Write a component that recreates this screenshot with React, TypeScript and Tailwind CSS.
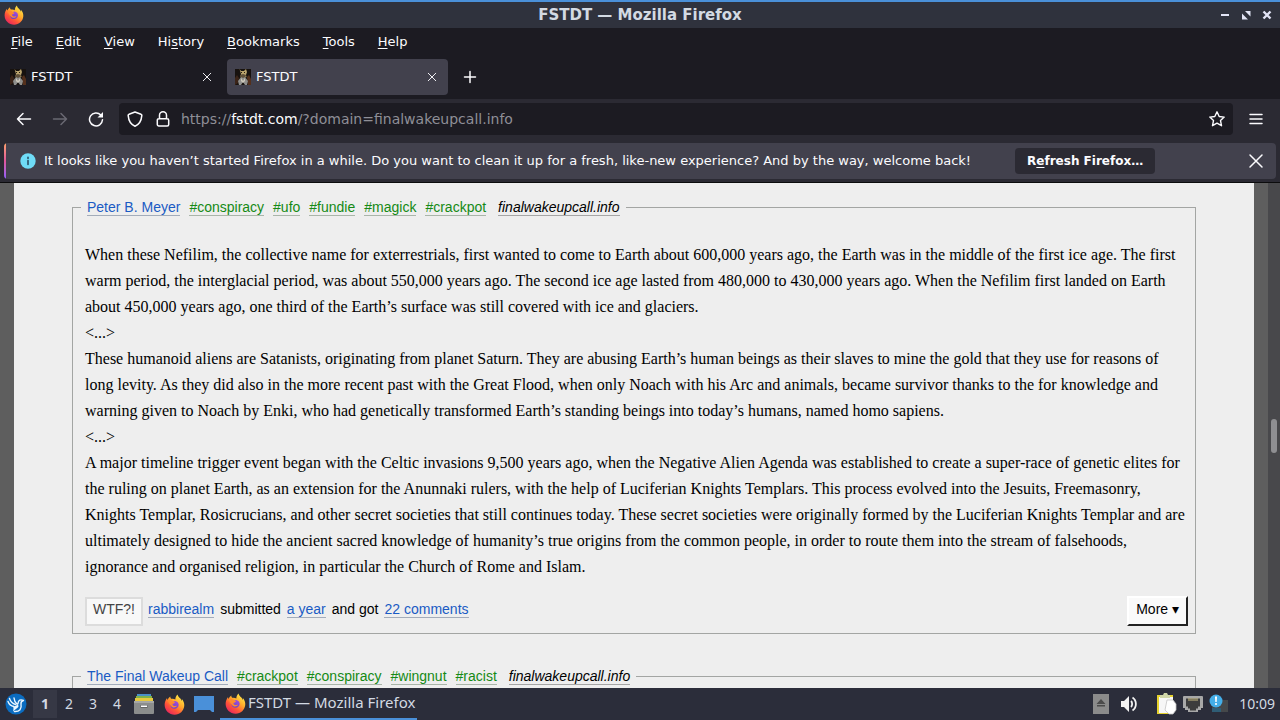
import React from 'react';

const tagLink = 'border-b border-[#a9b5a9] leading-4 text-[#158a15]';
const blueLink = 'border-b border-[#a3acba] leading-4 text-[#1a5bc4]';

function FirefoxLogo({ className }: { className?: string }) {
  return (
    <svg viewBox="0 0 20 20" className={className} aria-hidden="true">
      <defs>
        <linearGradient id="ffBody" x1="0.85" y1="0.05" x2="0.2" y2="0.95">
          <stop offset="0" stopColor="#fff04a" />
          <stop offset="0.4" stopColor="#ffa92b" />
          <stop offset="0.7" stopColor="#ff5438" />
          <stop offset="1" stopColor="#e8265f" />
        </linearGradient>
        <linearGradient id="ffGlobe" x1="0.7" y1="0" x2="0.3" y2="1">
          <stop offset="0" stopColor="#a04be0" />
          <stop offset="1" stopColor="#6b45c4" />
        </linearGradient>
      </defs>
      <path
        fill="url(#ffBody)"
        d="M12.9.4c.3 1.900 1.500 2.700 2.700 4 .7.700 1.100 1.500 1.400 2.300.2-.7.200-1.300 0-2 1.600 1.800 2.500 4 2.300 6.500-.4 4.900-4.300 8.500-9.200 8.500-5.200 0-9.400-4-9.500-9.200 0-2.700.9-4.900 2.300-6.700 0 .8.100 1.300.4 1.800C4 4.400 4.800 3 6 2.300c-.1.900.2 1.700.8 2.300 1.500-.4 2.900-.1 4 .6 0-1.900.8-3.700 2.100-4.800z"
      />
      <path
        fill="url(#ffGlobe)"
        d="M10.500 6.600c2.100.2 3.500 1.700 3.500 3.700 0 2.100-1.700 3.800-3.900 3.800-2.300 0-4-1.600-4-3.700 0-.5.1-.9.200-1.300.800-.4 1.600-.4 2.300 0 .8-.1 1.300-.4 1.800-.9-.8-.1-1.400-.4-1.600-.8.400-.4 1-.7 1.700-.8z"
      />
      <path
        fill="#ff8a2e"
        d="M3.300 6.500c1.400-1 3-1.100 4.500-.2.3.7 1 1.200 2.600 1.300-.2 1-1.500 1.500-2.200 1.800-.3 1.100.4 2 1.600 2 1 0 1.700-.5 2.600-.1-1 1.700-3.100 2-4.700 1-1.700-1-2.500-3.300-4.400-5.800z"
      />
    </svg>
  );
}

function Favicon() {
  return (
    <svg viewBox="0 0 16 16" className="size-4 shrink-0" aria-hidden="true">
      <rect width="16" height="16" fill="#17120f" />
      <path d="M0 9l2-3 2 3-1 5-3 2z" fill="#3b2418" />
      <path d="M12 8l2-2 2 4v6h-3z" fill="#54301c" />
      <path d="M4.500 0l1.500 2h3l2-2 1 3-1 3 .5 2-3 1-3-1 .5-3z" fill="#b9a36c" />
      <path d="M5 6l3-1 3 1-1 3H6z" fill="#5e4f39" />
      <path d="M3 12l3-4 2 1 2-1 3 4-1 4h-2l-2-3-2 3H4z" fill="#8f8f8c" />
      <path d="M6 9l2 3 2-3v3l-2 2-2-2z" fill="#cfcabc" />
      <path d="M6 3h1v1H6zM9 3h1v1H9z" fill="#2c2014" />
    </svg>
  );
}

function Cross({ className }: { className?: string }) {
  return (
    <svg viewBox="0 0 16 16" className={className} aria-hidden="true">
      <path d="M2 2l12 12M14 2L2 14" stroke="currentColor" fill="none" strokeWidth="1.500" strokeLinecap="round" />
    </svg>
  );
}

function Tab({ active }: { active?: boolean }) {
  return (
    <div
      className={
        active
          ? 'flex w-[221px] items-center rounded bg-[#42414d] px-2'
          : 'flex w-[221px] items-center rounded px-2'
      }
    >
      <Favicon />
      <button className="ml-[5px] flex-1 text-left">FSTDT</button>
      <button aria-label="Close tab" className="mr-[3px]">
        <Cross className="size-[10px]" />
      </button>
    </div>
  );
}

function Menu({ before, mark, after }: { before?: string; mark: string; after: string }) {
  return (
    <button>
      {before}
      <span className="underline underline-offset-2">{mark}</span>
      {after}
    </button>
  );
}

function Legend({ author, tags }: { author: string; tags: string[] }) {
  return (
    <legend className="-ml-1 px-[6px] text-sm leading-[18px]">
      <span className="flex items-center gap-[9px]">
        <a href="#author" className={blueLink}>{author}</a>
        {tags.map((t) => (
          <a key={t} href="#tag" className={tagLink}>{t}</a>
        ))}
        <a href="#source" className="ml-[3px] border-b border-[#a5a5a5] leading-4 text-black italic">
          finalwakeupcall.info
        </a>
      </span>
    </legend>
  );
}

function Browser() {
  return (
    <header className="shrink-0 bg-[#1c1b22] text-[13px] text-[#fbfbfe]">
      <div className="grid h-7 grid-cols-[1fr_auto_1fr] items-center border-t-2 border-[#4a90d9] bg-[#2f323d] px-1">
        <FirefoxLogo className="size-5" />
        <h1 className="text-[15px] font-bold text-[#d3dae3]">FSTDT — Mozilla Firefox</h1>
        <div className="flex justify-end gap-[9px] pr-[3px] text-[#e2e4f5]">
          <button aria-label="Minimize">
            <svg viewBox="0 0 12 12" className="size-3"><path d="M2 6h8" stroke="currentColor" strokeWidth="2" /></svg>
          </button>
          <button aria-label="Restore">
            <svg viewBox="0 0 12 12" className="size-3"><path d="M5 2h5.500v5.500zM2 4.500v6h6z" fill="currentColor" /></svg>
          </button>
          <button aria-label="Close">
            <svg viewBox="0 0 12 12" className="size-3"><path d="M2.500 2.500l7 7M9.500 2.500l-7 7" stroke="currentColor" strokeWidth="2.400" /></svg>
          </button>
        </div>
      </div>
      <nav aria-label="Menu bar" className="flex h-[27px] items-center gap-[23px] px-[11px]">
        <Menu mark="F" after="ile" />
        <Menu mark="E" after="dit" />
        <Menu mark="V" after="iew" />
        <Menu before="Hi" mark="s" after="tory" />
        <Menu mark="B" after="ookmarks" />
        <Menu mark="T" after="ools" />
        <Menu mark="H" after="elp" />
      </nav>
      <div className="flex h-11 items-stretch gap-1 px-[2px] py-1">
        <Tab />
        <Tab active />
        <button aria-label="New tab" className="ml-[10px] self-center">
          <svg viewBox="0 0 16 16" className="size-4"><path d="M8 2.500v11M2.500 8h11" stroke="currentColor" strokeWidth="1.500" strokeLinecap="round" /></svg>
        </button>
      </div>
      <div className="flex h-11 items-center bg-[#2b2a33] pr-4 pl-4 pb-1">
        <button aria-label="Back">
          <svg viewBox="0 0 16 16" className="size-4"><path d="M7 2.500L1.500 8 7 13.500M1.500 8h13" fill="none" stroke="currentColor" strokeWidth="1.500" strokeLinecap="round" strokeLinejoin="round" /></svg>
        </button>
        <button aria-label="Forward" className="ml-5 text-[#6a6973]">
          <svg viewBox="0 0 16 16" className="size-4"><path d="M9 2.500L14.500 8 9 13.500M14.500 8h-13" fill="none" stroke="currentColor" strokeWidth="1.500" strokeLinecap="round" strokeLinejoin="round" /></svg>
        </button>
        <button aria-label="Reload" className="ml-5">
          <svg viewBox="0 0 16 16" className="size-4">
            <path d="M12.800 4A6.500 6.500 0 1 0 14.500 8.800" fill="none" stroke="currentColor" strokeWidth="1.500" strokeLinecap="round" />
            <path d="M15 1v5.500H9.500z" fill="currentColor" />
          </svg>
        </button>
        <div className="ml-[15px] flex h-8 flex-1 items-center rounded bg-[#1c1b22] px-2">
          <svg viewBox="0 0 16 16" className="size-4"><path d="M8 1l6 2.300c.6.200.9.700.8 1.300C14.400 9.500 12 13.500 8 15.200 4 13.500 1.600 9.500 1.200 4.600c-.1-.6.200-1.100.8-1.300z" fill="none" stroke="currentColor" strokeWidth="1.500" strokeLinejoin="round" /></svg>
          <svg viewBox="0 0 16 16" className="ml-3 size-4"><path d="M4.500 7.500V4.300a3.500 3.500 0 0 1 7 0v3.200M3.800 7.700h8.400a1.500 1.500 0 0 1 1.500 1.500v4.300a1.500 1.500 0 0 1-1.500 1.500H3.800a1.500 1.500 0 0 1-1.500-1.500V9.200a1.500 1.500 0 0 1 1.500-1.500z" fill="none" stroke="currentColor" strokeWidth="1.500" /></svg>
          <p className="ml-[10px] flex-1 text-sm text-[#8f8f97]">
            https://<span className="text-[#fbfbfe]">fstdt.com</span>/?domain=finalwakeupcall.info
          </p>
          <button aria-label="Bookmark this page">
            <svg viewBox="0 0 16 16" className="size-4"><path d="M8 .8l2.200 4.700 5 .6-3.700 3.500 1 5.100L8 12.200l-4.500 2.500 1-5.100L.8 6.100l5-.6z" fill="none" stroke="currentColor" strokeWidth="1.400" strokeLinejoin="round" /></svg>
          </button>
        </div>
        <button aria-label="Application menu" className="ml-[15px]">
          <svg viewBox="0 0 16 16" className="size-4"><path d="M2 3.500h12M2 8h12M2 12.500h12" stroke="currentColor" strokeWidth="1.500" strokeLinecap="round" /></svg>
        </button>
      </div>
      <div className="border-b border-[#0c0c0d] bg-[#2b2a33] px-1 pb-[3px]">
        <div className="flex h-9 items-center overflow-hidden rounded bg-[#42414d] pr-3">
          <div className="h-full w-[2px] bg-linear-to-b from-[#ffa266] via-[#e0559a] to-[#9059ff]" />
          <svg viewBox="0 0 16 16" className="ml-[14px] size-4">
            <circle cx="8" cy="8" r="7.700" fill="#6fdcf7" />
            <path d="M8 4.200v1.200M8 7.500v4" stroke="#23445a" strokeWidth="1.500" strokeLinecap="round" />
          </svg>
          <p className="ml-2 whitespace-nowrap">
            It looks like you haven’t started Firefox in a while. Do you want to clean it up for a fresh, like-new experience? And by the way, welcome back!
          </p>
          <button className="ml-11 h-[26px] rounded bg-[#2b2a33] px-3 text-xs font-bold">
            R<span className="underline underline-offset-2">e</span>fresh Firefox…
          </button>
          <button aria-label="Dismiss" className="ml-auto">
            <Cross className="size-4" />
          </button>
        </div>
      </div>
    </header>
  );
}

function Page() {
  return (
    <div className="flex min-h-0 flex-1 bg-[#5e5e5e] pl-[14px] font-['Liberation_Sans',sans-serif] text-sm text-black">
      <main className="min-w-0 flex-1 overflow-hidden bg-[#eeeeee] px-[58px] pt-4">
        <fieldset className="border border-[#a3a5a3] px-[12px] pb-[7px]">
          <Legend author="Peter B. Meyer" tags={['#conspiracy', '#ufo', '#fundie', '#magick', '#crackpot']} />
          <div className="mt-[26px] -mr-1 font-['Liberation_Serif',serif] text-base leading-[26px]">
            <p>
              When these Nefilim, the collective name for exterrestrials, first wanted to come to Earth about 600,000 years ago, the Earth was in the middle of the first ice age. The first warm period, the interglacial period, was about 550,000 years ago. The second ice age lasted from 480,000 to 430,000 years ago. When the Nefilim first landed on Earth about 450,000 years ago, one third of the Earth’s surface was still covered with ice and glaciers.
            </p>
            <p>&lt;...&gt;</p>
            <p>
              These humanoid aliens are Satanists, originating from planet Saturn. They are abusing Earth’s human beings as their slaves to mine the gold that they use for reasons of long levity. As they did also in the more recent past with the Great Flood, when only Noach with his Arc and animals, became survivor thanks to the for knowledge and warning given to Noach by Enki, who had genetically transformed Earth’s standing beings into today’s humans, named homo sapiens.
            </p>
            <p>&lt;...&gt;</p>
            <p>
              A major timeline trigger event began with the Celtic invasions 9,500 years ago, when the Negative Alien Agenda was established to create a super-race of genetic elites for the ruling on planet Earth, as an extension for the Anunnaki rulers, with the help of Luciferian Knights Templars. This process evolved into the Jesuits, Freemasonry, Knights Templar, Rosicrucians, and other secret societies that still continues today. These secret societies were originally formed by the Luciferian Knights Templar and are ultimately designed to hide the ancient sacred knowledge of humanity’s true origins from the common people, in order to route them into the stream of falsehoods, ignorance and organised religion, in particular the Church of Rome and Islam.
            </p>
          </div>
          <div className="mt-4 -mr-[5px] flex items-center gap-[5px]">
            <button className="h-[29px] border-2 border-[#dcdcdc] bg-[#f8f8f8] px-[6px] pb-1 text-[#444444]">WTF?!</button>
            <p className="flex gap-[6px] pb-1">
              <a href="#user" className={blueLink}>rabbirealm</a>
              <span className="leading-4">submitted</span>
              <a href="#quote" className={blueLink}>a year</a>
              <span className="leading-4">and got</span>
              <a href="#comments" className={blueLink}>22 comments</a>
            </p>
            <button className="ml-auto h-[30px] border-2 border-t-white border-r-[#222222] border-b-[#222222] border-l-white bg-[#fafafa] px-[7px] pb-1">
              More ▾
            </button>
          </div>
        </fieldset>
        <fieldset className="mt-[34px] border border-[#a3a5a3] px-[12px] pb-10">
          <Legend author="The Final Wakeup Call" tags={['#crackpot', '#conspiracy', '#wingnut', '#racist']} />
        </fieldset>
      </main>
      <div className="w-[14px]" />
      <div className="flex w-3 flex-col items-center bg-[#48484b] pt-[236px]">
        <div className="h-[34px] w-[6px] rounded-full bg-[#8f8f92]" />
      </div>
    </div>
  );
}

function Taskbar() {
  return (
    <footer className="flex h-8 shrink-0 items-center bg-[#2b2d3a] pr-[5px] pl-[5px] font-['Noto_Sans',sans-serif] text-sm text-[#d3dae3]">
      <button aria-label="Start menu">
        <svg viewBox="0 0 22 22" className="size-[22px]">
          <circle cx="11" cy="11" r="10.500" fill="#0b6cc0" />
          <path d="M3 8.500c1 2.800 3 4.500 5.800 5M4.500 5.500c1 3 3 5 6 6M9 5c.2 2.500 1.200 4.500 3 6M9.500 18.500c5 .3 7.500-2.500 6.500-7.500-.3-2 .2-3 2.500-3.500-3-1.500-5.300-.3-5.500 3" fill="none" stroke="#eaf6ff" strokeWidth="1.400" strokeLinecap="round" strokeLinejoin="round" />
          <path d="M8 13c2 .5 4-.5 5-2.500l.5 3c-1 2-3 2.500-5.500 5 .5-2 .8-3.500 0-5.500z" fill="#eaf6ff" />
        </svg>
      </button>
      <div className="ml-[6px] flex">
        <button className="h-7 w-6 bg-[#363845] font-bold">1</button>
        <button className="h-7 w-6">2</button>
        <button className="h-7 w-6">3</button>
        <button className="h-7 w-6">4</button>
      </div>
      <button aria-label="Files" className="ml-1">
        <svg viewBox="0 0 22 22" className="size-[22px]">
          <path d="M4 1h14v4H4z" fill="#4a90c8" />
          <path d="M3 3h16v3H3z" fill="#7fb24a" />
          <path d="M2 5h18v4H2z" fill="#e8c93f" />
          <rect x="1" y="8" width="20" height="13" rx="1" fill="#8b8d8c" />
          <rect x="1" y="8" width="20" height="2" fill="#a5a7a6" />
          <path d="M7.500 12h7v3h-7z" fill="#656766" />
          <path d="M8 12.500h6v1.500H8z" fill="#ffffff" />
        </svg>
      </button>
      <button aria-label="Web browser" className="ml-[9px]"><FirefoxLogo className="size-[21px]" /></button>
      <button aria-label="Show desktop" className="ml-[9px]">
        <svg viewBox="0 0 20 18" className="h-[18px] w-5">
          <path d="M0 1h20v16h-2l-2-2H4l-2 2H0z" fill="#4a90d9" />
        </svg>
      </button>
      <button className="ml-[6px] flex h-8 items-center border-b-2 border-[#4a90d9] pl-[5px] pr-[2px] text-[15px] whitespace-nowrap">
        <FirefoxLogo className="mr-[2px] size-[21px]" />
        FSTDT — Mozilla Firefox
      </button>
      <div className="ml-auto flex items-center">
        <svg viewBox="0 0 16 20" className="h-5 w-4">
          <rect width="16" height="20" fill="#8b8b8b" />
          <path d="M8 5l4.500 5h-9zM4 11h8v1.500H4z" fill="#4b4b4b" />
        </svg>
        <svg viewBox="0 0 18 18" className="ml-[11px] size-[18px]">
          <path d="M1 6h3l5-5v16l-5-5H1z" fill="#f2f2f2" />
          <path d="M11 6c1.500 1.500 1.500 4.500 0 6M12.500 2.500c4.500 3 4.500 10 0 13" fill="none" stroke="#f2f2f2" strokeWidth="1.800" />
        </svg>
        <svg viewBox="0 0 21 22" className="ml-[18px] h-[22px] w-[21px]">
          <rect x="1" y="2" width="16" height="19" fill="#e6d22e" />
          <rect x="3" y="4" width="14" height="16" fill="#f7f7f7" />
          <path d="M4 2h3l1-2h3l1 2h2v3H4z" fill="#d0d6a8" />
          <path d="M11 7h6l3 4v6l-3 4h-4l-4-4z" fill="#ffffff" stroke="#c5c5c5" strokeWidth="0.800" />
        </svg>
        <svg viewBox="0 0 20 18" className="ml-[6px] h-[18px] w-5">
          <path d="M1 1h18a1 1 0 0 1 1 1v11h-2v2h-3v2H5v-2H2v-2H0V2a1 1 0 0 1 1-1z" fill="#a8a8a8" />
          <path d="M3 3.500h14v8h-2v2h-2v2H7v-2H5v-2H3z" fill="#3c3c3c" />
          <path d="M6 3v3M8 3v3M10 3v3M12 3v3M14 3v3" stroke="#d9c98a" strokeWidth="0.900" />
        </svg>
        <svg viewBox="0 0 20 20" className="ml-[6px] size-5">
          <rect x="3" y="6" width="16" height="12" fill="#45484a" />
          <rect x="3" y="14" width="9" height="4" fill="#2f5d75" />
          <circle cx="7" cy="7" r="6.500" fill="#44aee8" />
          <path d="M6 2.500h2L7.700 8H6.300z" fill="#ffffff" />
          <circle cx="7" cy="10" r="1.100" fill="#ffffff" />
        </svg>
        <time className="ml-[10px]">10:09</time>
      </div>
    </footer>
  );
}

export default function App() {
  return (
    <div className="flex h-screen flex-col overflow-hidden font-['DejaVu_Sans',sans-serif]">
      <Browser />
      <Page />
      <Taskbar />
    </div>
  );
}
